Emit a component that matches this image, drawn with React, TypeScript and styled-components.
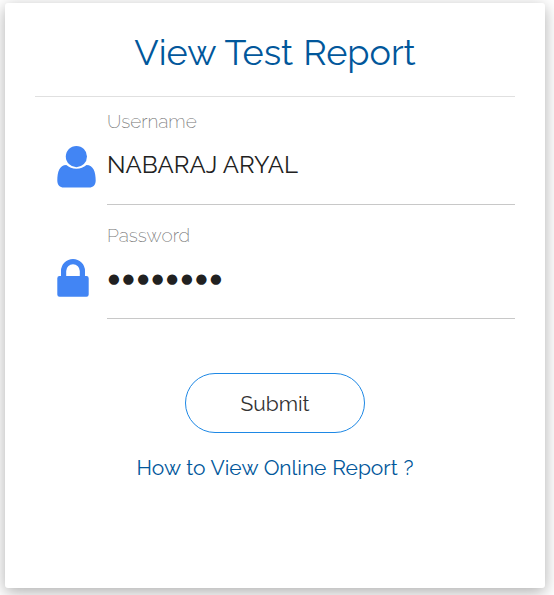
import React from "react";
import styled, { createGlobalStyle } from "styled-components";

const GlobalStyle = createGlobalStyle`
  *, *::before, *::after { box-sizing: border-box; }
  body { margin: 0; background: #fff; overflow: hidden; font-family: Raleway, Lato, sans-serif; }
`;

const Page = styled.main`
  height: 595px;
  padding: 3px 9px 7px 5px;
`;

const Card = styled.form`
  height: 585px;
  padding: 0 30px;
  display: flex;
  flex-direction: column;
  background: #fff;
  border-radius: 3px;
  box-shadow: 0 4px 16px rgba(0, 0, 0, 0.32);
`;

const Title = styled.h1`
  margin: 0;
  height: 94px;
  border-bottom: 1px solid #e0e0e0;
  color: #01579b;
  font-size: 36px;
  font-weight: 400;
  line-height: 99px;
  word-spacing: 1px;
  text-align: center;
  white-space: nowrap;
`;

const Field = styled.div<{ $height: number }>`
  height: ${(p) => p.$height}px;
  display: grid;
  grid-template-columns: 72px 1fr;
`;

const IconCell = styled.div<{ $top: number }>`
  padding: ${(p) => p.$top}px 0 0 22px;
  svg { display: block; fill: #4285f4; }
`;

const FieldBody = styled.div`
  display: flex;
  flex-direction: column;
  border-bottom: 1px solid #c8c8c8;
`;

const Label = styled.label<{ $top: number }>`
  margin-top: ${(p) => p.$top}px;
  height: 24px;
  color: #757575;
  font-size: 19px;
  font-weight: 200;
  line-height: 24px;
`;

const Value = styled.div`
  margin-top: 16px;
  color: #212121;
  font-size: 24px;
  line-height: 32px;
  letter-spacing: 0.05px;
  white-space: nowrap;
`;

const Mask = styled(Value)`
  margin-top: 15px;
  padding-left: 1px;
  font-family: "DejaVu Sans", sans-serif;
  font-size: 13.5px;
  letter-spacing: 2.8px;
`;

const Actions = styled.div`
  padding-top: 54px;
  display: flex;
  flex-direction: column;
  align-items: center;
`;

const SubmitButton = styled.button`
  width: 180px;
  height: 60px;
  padding: 0;
  border: 1px solid #1e88e5;
  border-radius: 30px;
  background: #fff;
  color: #333;
  font-family: inherit;
  font-size: 21px;
  line-height: 60px;
`;

const HelpLink = styled.a`
  margin-top: 19px;
  color: #01579b;
  font-size: 21px;
  line-height: 32px;
  word-spacing: 0.4px;
  white-space: nowrap;
`;

const UserIcon = () => (
  <svg width="39" height="42" viewBox="0 0 39 42" aria-hidden="true">
    <circle cx="19.4" cy="10.6" r="10.6" />
    <path d="M9.3 19C12 21.400 15.500 22.800 19.400 22.800s7.400-1.400 10.100-3.800c6.800 0 9.200 7 9.200 15.500 0 4.500-2.600 7.100-6.500 7.100H6.800c-3.900 0-6.500-2.600-6.500-7.100C.3 26 2.500 19 9.300 19Z" />
  </svg>
);

const LockIcon = () => (
  <svg width="32" height="38" viewBox="0 0 32 38" aria-hidden="true">
    <path
      fillRule="evenodd"
      d="M4 17v-5a12 12 0 0 1 24 0v5h1.5a2.2 2.2 0 0 1 2.2 2.2v16.4a2.2 2.2 0 0 1-2.2 2.2h-27a2.2 2.2 0 0 1-2.2-2.2V19.2a2.2 2.2 0 0 1 2.2-2.2ZM9.200 17h13.600v-5a6.800 6.800 0 0 0-13.600 0Z"
    />
  </svg>
);

export default function App() {
  return (
    <>
      <GlobalStyle />
      <Page>
        <Card>
          <Title>View Test Report</Title>
          <Field $height={108}>
            <IconCell $top={49}><UserIcon /></IconCell>
            <FieldBody>
              <Label $top={12}>Username</Label>
              <Value>NABARAJ ARYAL</Value>
            </FieldBody>
          </Field>
          <Field $height={114}>
            <IconCell $top={54}><LockIcon /></IconCell>
            <FieldBody>
              <Label $top={18}>Password</Label>
              <Mask>●●●●●●●●</Mask>
            </FieldBody>
          </Field>
          <Actions>
            <SubmitButton type="button">Submit</SubmitButton>
            <HelpLink>How to View Online Report ?</HelpLink>
          </Actions>
        </Card>
      </Page>
    </>
  );
}
